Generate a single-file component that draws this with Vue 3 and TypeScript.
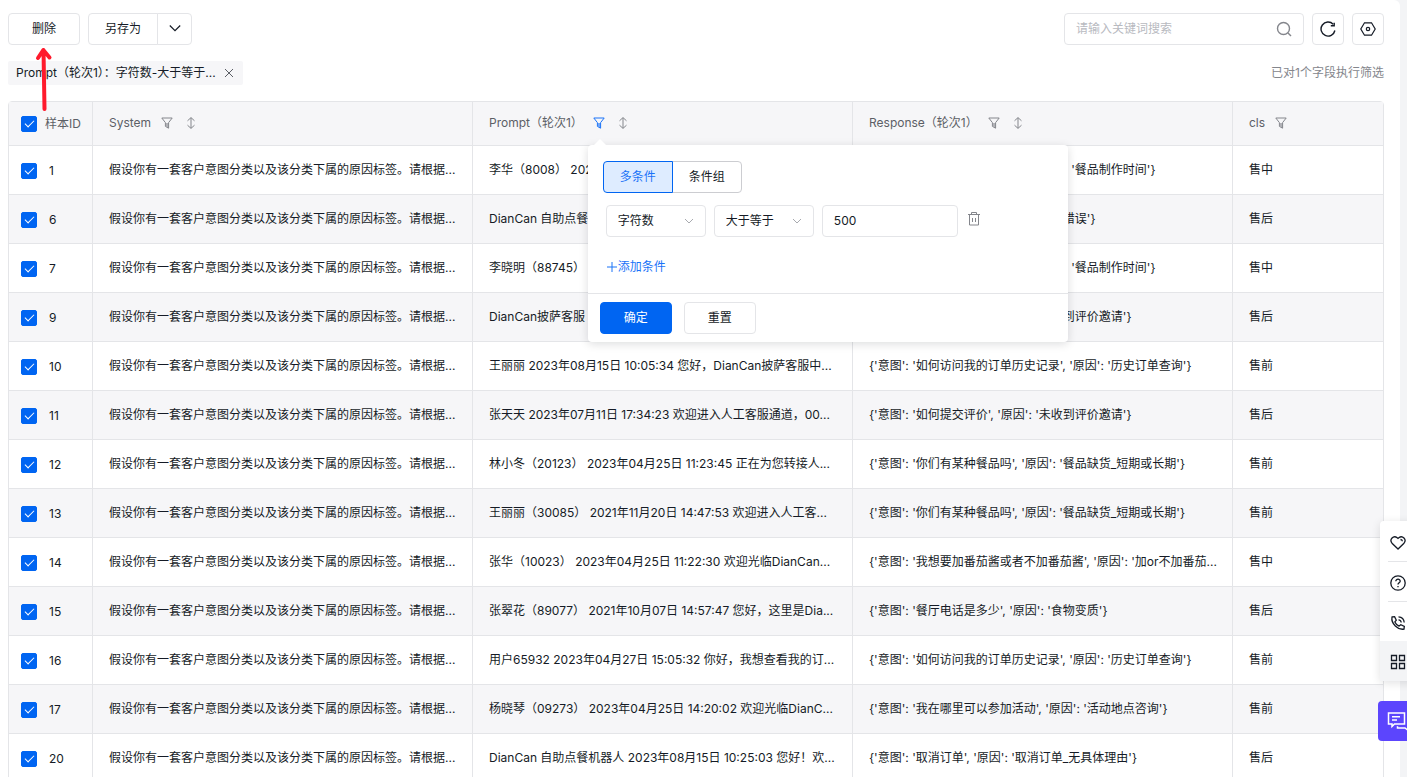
<script setup lang="ts">
import { ref } from 'vue'

interface Row {
  id: number
  system: string
  prompt: string
  response: string
  cls: string
}

interface Column {
  key: 'system' | 'prompt' | 'response' | 'cls'
  title: string
  sortable: boolean
}

const system = '假设你有一套客户意图分类以及该分类下属的原因标签。请根据...'

const answer = (intent: string, reason: string): string => `{'意图': '${intent}', '原因': '${reason}'}`

const makeRow = (id: number, prompt: string, response: string, cls: string): Row => ({
  id,
  system,
  prompt,
  response,
  cls,
})

const columns: Column[] = [
  { key: 'system', title: 'System', sortable: true },
  { key: 'prompt', title: 'Prompt（轮次1）', sortable: true },
  { key: 'response', title: 'Response（轮次1）', sortable: true },
  { key: 'cls', title: 'cls', sortable: false },
]

const rows: Row[] = [
  makeRow(1, '李华（8008） 2023', answer('餐品多久可以做好呢', '餐品制作时间'), '售中'),
  makeRow(6, 'DianCan 自助点餐', answer('如何修改订单', '下单错误'), '售后'),
  makeRow(7, '李晓明（88745）', answer('餐品多久可以做好呢', '餐品制作时间'), '售中'),
  makeRow(9, 'DianCan披萨客服', answer('如何提交评价', '未收到评价邀请'), '售后'),
  makeRow(10, '王丽丽 2023年08月15日 10:05:34 您好，DianCan披萨客服中...', answer('如何访问我的订单历史记录', '历史订单查询'), '售前'),
  makeRow(11, '张天天 2023年07月11日 17:34:23 欢迎进入人工客服通道，00...', answer('如何提交评价', '未收到评价邀请'), '售后'),
  makeRow(12, '林小冬（20123） 2023年04月25日 11:23:45 正在为您转接人...', answer('你们有某种餐品吗', '餐品缺货_短期或长期'), '售前'),
  makeRow(13, '王丽丽（30085） 2021年11月20日 14:47:53 欢迎进入人工客...', answer('你们有某种餐品吗', '餐品缺货_短期或长期'), '售前'),
  makeRow(14, '张华（10023） 2023年04月25日 11:22:30 欢迎光临DianCan...', "{'意图': '我想要加番茄酱或者不加番茄酱', '原因': '加or不加番茄...", '售中'),
  makeRow(15, '张翠花（89077） 2021年10月07日 14:57:47 您好，这里是Dia...', answer('餐厅电话是多少', '食物变质'), '售后'),
  makeRow(16, '用户65932 2023年04月27日 15:05:32 你好，我想查看我的订...', answer('如何访问我的订单历史记录', '历史订单查询'), '售前'),
  makeRow(17, '杨晓琴（09273） 2023年04月25日 14:20:02 欢迎光临DianC...', answer('我在哪里可以参加活动', '活动地点咨询'), '售前'),
  makeRow(20, 'DianCan 自助点餐机器人 2023年08月15日 10:25:03 您好！欢...', answer('取消订单', '取消订单_无具体理由'), '售后'),
]

const selected = ref<number[]>(rows.map((r) => r.id))
const keyword = ref('')
const field = ref('字符数')
const operator = ref('大于等于')
const amount = ref('500')
const mode = ref('多条件')

const toggleAll = (): void => {
  selected.value = selected.value.length === rows.length ? [] : rows.map((r) => r.id)
}
</script>

<template>
  <div class="page">
    <main class="panel">
      <div class="toolbar">
        <button class="btn" type="button">删除</button>
        <div class="split">
          <button class="btn split-main" type="button">另存为</button>
          <button class="btn split-more" type="button" aria-label="更多">
            <svg width="14" height="14" viewBox="0 0 14 14"><path d="M1.800 3.500L7 8.700l5.200-5.200" /></svg>
          </button>
        </div>
        <div class="tools">
          <div class="search">
            <input v-model="keyword" type="text" aria-label="搜索" placeholder="请输入关键词搜索" />
            <svg width="16" height="16" viewBox="0 0 16 16"><circle cx="7.5" cy="7.5" r="6" /><path d="M12 12l3 3" /></svg>
          </div>
          <button class="btn square" type="button" aria-label="刷新">
            <svg width="16" height="16" viewBox="0 0 16 16"><path d="M14.900 9.500A7 7 0 1 1 13.200 3.300" /><path d="M14.200 1.800v2.900h-3.400" /></svg>
          </button>
          <button class="btn square" type="button" aria-label="设置">
            <svg class="fine" width="16" height="16" viewBox="0 0 16 16"><path d="M4.500 1.800h7L15.200 8l-3.700 6.200h-7L.8 8z" /><circle cx="8" cy="8" r="1.700" /></svg>
          </button>
        </div>
      </div>

      <div class="filters">
        <div class="tag">
          <span>Prompt（轮次1）：字符数-大于等于...</span>
          <button class="plain" type="button" aria-label="移除筛选">
            <svg width="10" height="10" viewBox="0 0 10 10"><path d="M1 1l8 8M9 1L1 9" /></svg>
          </button>
        </div>
        <span class="summary">已对1个字段执行筛选</span>
      </div>

      <table class="grid">
        <colgroup>
          <col class="c-id" />
          <col class="c-text" />
          <col class="c-text" />
          <col class="c-text" />
          <col />
        </colgroup>
        <thead>
          <tr>
            <th class="id-cell">
              <label class="pick head-pick">
                <input type="checkbox" :checked="selected.length === rows.length" @change="toggleAll" />
                <span>样本ID</span>
              </label>
            </th>
            <th v-for="col in columns" :key="col.key">
              <div class="head">
                <span>{{ col.title }}</span>
                <div class="anchor">
                  <button class="plain icon" :class="{ active: col.key === 'prompt' }" type="button" aria-label="筛选">
                    <svg width="12" height="12" viewBox="0 0 12 12">
                      <path d="M.8 1h10.400L7.600 5.600v5.600L4.400 9.400V5.600z" />
                      <path class="fill" d="M5 6h2.400v4.800L5 9.200z" />
                    </svg>
                  </button>
                  <section v-if="col.key === 'prompt'" class="popover">
                    <div class="pop-body">
                      <div class="tabs">
                        <button
                          v-for="name in ['多条件', '条件组']"
                          :key="name"
                          class="tab"
                          :class="{ on: mode === name }"
                          type="button"
                          @click="mode = name"
                        >
                          {{ name }}
                        </button>
                      </div>
                      <div class="condition">
                        <div class="select">
                          <select v-model="field" aria-label="字段">
                            <option>字符数</option>
                          </select>
                          <svg width="10" height="10" viewBox="0 0 10 10"><path d="M1 3l4 4 4-4" /></svg>
                        </div>
                        <div class="select">
                          <select v-model="operator" aria-label="运算符">
                            <option>大于等于</option>
                          </select>
                          <svg width="10" height="10" viewBox="0 0 10 10"><path d="M1 3l4 4 4-4" /></svg>
                        </div>
                        <input v-model="amount" class="amount" type="text" aria-label="数值" />
                        <button class="plain trash" type="button" aria-label="删除条件">
                          <svg width="14" height="16" viewBox="0 0 14 16">
                            <path d="M1 3.500h12M4.500 3V1.500h5V3M2.500 4v10h9V4M5.500 7v4M8.500 7v4" />
                          </svg>
                        </button>
                      </div>
                      <button class="plain add" type="button">
                        <svg width="12" height="12" viewBox="0 0 12 12"><path d="M6 1v10M1 6h10" /></svg>
                        <span>添加条件</span>
                      </button>
                    </div>
                    <div class="pop-foot">
                      <button class="btn primary" type="button">确定</button>
                      <button class="btn" type="button">重置</button>
                    </div>
                  </section>
                </div>
                <button v-if="col.sortable" class="plain icon sort" type="button" aria-label="排序">
                  <svg width="12" height="12" viewBox="0 0 12 12"><path d="M6 .8v10.400M2.500 3.800L6 .6l3.500 3.200M2.500 8.200L6 11.400l3.500-3.200" /></svg>
                </button>
              </div>
            </th>
          </tr>
        </thead>
        <tbody>
          <tr v-for="row in rows" :key="row.id">
            <td class="id-cell">
              <label class="pick">
                <input v-model="selected" type="checkbox" :value="row.id" />
                <span>{{ row.id }}</span>
              </label>
            </td>
            <td v-for="col in columns" :key="col.key">{{ row[col.key] }}</td>
          </tr>
        </tbody>
      </table>

      <svg class="pointer" width="20" height="66" viewBox="0 0 20 66">
        <path d="M10.500 63L9.500 4M4 12L9.300 4L15.500 11.500" />
      </svg>
    </main>

    <aside class="dock">
      <div class="dock-list">
        <button class="plain dock-item" type="button" aria-label="收藏">
          <svg width="16" height="16" viewBox="0 0 16 16"><path d="M8 14L2 8.200C-1 4.600 3.400-.2 7.200 2.800L8 3.500l.8-.7C12.600-.2 17 4.600 14 8.200zM10.500 4.500q1.800.2 1.900 1.800" /></svg>
        </button>
        <button class="plain dock-item" type="button" aria-label="帮助">
          <svg width="16" height="16" viewBox="0 0 16 16"><circle cx="8" cy="8" r="7.200" /><path d="M5.800 6.300C5.800 3.300 10.300 3.500 10.200 6.200C10.100 7.800 8 7.800 8 9.500M8 11v1.300" /></svg>
        </button>
        <button class="plain dock-item" type="button" aria-label="电话">
          <svg width="16" height="16" viewBox="0 0 16 16"><path d="M2 2l2.600-.3 1.700 3.500-1.400 1.700c.8 1.900 2.300 3.400 4.200 4.200l1.700-1.400 3.500 1.700-.3 2.700C8 15.300.8 8.500 2 2zM8.500 1.800c3.200.2 5.500 2.500 5.700 5.700M8.500 4.800c1.500.1 2.600 1.200 2.700 2.700" /></svg>
        </button>
        <button class="plain dock-item shaded" type="button" aria-label="应用">
          <svg width="16" height="16" viewBox="0 0 16 16"><path d="M1.500 1.500h5v5h-5zM9.500 1.500h5v5h-5zM1.500 9.500h5v5h-5zM9.500 9.500h5v5h-5z" /></svg>
        </button>
      </div>
      <button class="plain chat" type="button" aria-label="在线咨询">
        <svg width="24" height="20" viewBox="0 0 24 20"><path d="M1.500 2h16v11H7.500L5 15.500V13H1.500zM5 5.800h8M5 9h5M10.500 15.200v1.800h7.500l3 2.300v-2.300h2V9.500h-2.500" /></svg>
      </button>
    </aside>
  </div>
</template>

<style>
body {
  overflow: hidden;
  background: #f3f4f6;
}
</style>

<style scoped>
.page {
  height: 100vh;
  overflow: hidden;
  padding-right: 7px;
  box-sizing: border-box;
  color: #151b26;
  font: 12px/20px Inter, "Noto Sans CJK SC", sans-serif;
}
.page *,
.page *::before {
  box-sizing: border-box;
}
button,
input,
select {
  font: inherit;
  color: inherit;
}
svg {
  display: block;
  flex: none;
  fill: none;
  stroke: currentColor;
}
.panel {
  position: relative;
  min-height: 100%;
  padding: 13px 16px 0 8px;
  background: #fff;
  border-top-right-radius: 6px;
}
.toolbar,
.tools,
.filters,
.tag,
.split,
.head,
.tabs,
.condition,
.pop-foot {
  display: flex;
  align-items: center;
}
.toolbar {
  gap: 8px;
}
.btn {
  display: flex;
  align-items: center;
  justify-content: center;
  height: 32px;
  min-width: 72px;
  padding: 0 16px;
  border: 1px solid #e4e5e8;
  border-radius: 4px;
  background: #fff;
}
.split-main {
  min-width: 70px;
  border-radius: 4px 0 0 4px;
}
.split-more {
  min-width: 35px;
  margin-left: -1px;
  padding: 0;
  border-radius: 0 4px 4px 0;
}
.split-more svg {
  stroke-width: 1.200;
}
.tools {
  gap: 8px;
  margin-left: auto;
}
.square {
  min-width: 32px;
  padding: 0;
}
.square svg {
  stroke-width: 1.400;
}
.square .fine {
  stroke-width: 1.200;
}
.search {
  display: flex;
  align-items: center;
  width: 240px;
  height: 32px;
  padding: 0 11px;
  border: 1px solid #e4e5e8;
  border-radius: 4px;
  color: #84868c;
}
.search input {
  flex: 1;
  min-width: 0;
  padding: 0;
  border: 0;
  outline: 0;
  background: none;
  color: #151b26;
}
.search input::placeholder {
  color: #b8babf;
}
.search svg {
  stroke-width: 1.400;
}
.filters {
  justify-content: space-between;
  margin: 16px 0;
}
.tag {
  gap: 8px;
  height: 24px;
  padding: 0 9px 0 8px;
  background: #f6f6f8;
  border-radius: 2px;
}
.plain {
  display: flex;
  align-items: center;
  padding: 0;
  border: 0;
  background: none;
}
.tag .plain {
  color: #5c5f66;
}
.summary {
  color: #84868c;
}
.grid {
  width: 100%;
  table-layout: fixed;
  border-spacing: 0;
  border: 1px solid #e4e5e8;
  border-radius: 4px 4px 0 0;
}
.c-id {
  width: 84px;
}
.c-text {
  width: 380px;
}
th,
td {
  padding: 0 16px;
  border-bottom: 1px solid #e4e5e8;
  border-right: 1px solid #e4e5e8;
  text-align: left;
  font-weight: 400;
  white-space: nowrap;
}
th:last-child,
td:last-child {
  border-right: 0;
}
th {
  height: 44px;
  padding-bottom: 2px;
  color: #5c5f66;
  background: #f6f6f8;
}
td {
  height: 49px;
}
tbody tr:nth-child(even) td {
  background: #f6f6f8;
}
.id-cell {
  padding-left: 12px;
  padding-right: 0;
}
.pick {
  display: flex;
  align-items: center;
  gap: 12px;
  padding-top: 2px;
}
.head-pick {
  gap: 8px;
}
.pick input {
  appearance: none;
  flex: none;
  display: grid;
  place-items: center;
  width: 16px;
  height: 16px;
  margin: 0;
  border: 1px solid #c4c6ca;
  border-radius: 2px;
}
.pick input:checked {
  border-color: #0065f2;
  background: #0065f2;
}
.pick input:checked::before {
  content: "";
  width: 9px;
  height: 5px;
  margin-bottom: 3px;
  border: solid #fff;
  border-width: 0 0 1px 1px;
  transform: rotate(-45deg);
}
.head {
  gap: 10px;
}
.icon {
  color: #84868c;
}
.icon .fill {
  fill: currentColor;
  stroke: none;
  opacity: 0.600;
}
.icon.active {
  color: #1a73f8;
}
.sort {
  margin-left: 2px;
}
.anchor {
  position: relative;
}
.popover {
  position: absolute;
  z-index: 2;
  top: 28px;
  left: -5px;
  width: 480px;
  background: #fff;
  border-radius: 4px;
  box-shadow: 0 2px 10px rgba(7, 12, 20, 0.140);
  color: #151b26;
}
.popover::before {
  content: "";
  position: absolute;
  top: -6px;
  left: 6px;
  border: 6px solid transparent;
  border-top: 0;
  border-bottom-color: #fff;
}
.pop-body {
  padding: 16px 16px 16px 15px;
  border-bottom: 1px solid #e4e5e8;
}
.tab {
  height: 32px;
  width: 70px;
  padding: 0;
  border: 1px solid #cccdd1;
  border-radius: 0 4px 4px 0;
  background: #fff;
}
.tab + .tab {
  margin-left: -1px;
}
.tab:first-child {
  border-radius: 4px 0 0 4px;
}
.tab.on {
  position: relative;
  border-color: #0065f2;
  background: #deecff;
  color: #1a73f8;
}
.condition {
  gap: 8px;
  margin: 12px 0 20px;
  padding-left: 3px;
}
.select {
  display: grid;
  align-items: center;
  width: 100px;
}
.select > * {
  grid-area: 1 / 1;
}
.select svg {
  justify-self: end;
  margin-right: 12px;
  color: #a8aaaf;
  pointer-events: none;
}
select,
.amount {
  appearance: none;
  width: 100%;
  height: 32px;
  padding: 0 11px;
  border: 1px solid #e4e5e8;
  border-radius: 4px;
  background: #fff;
}
.amount {
  width: 136px;
}
.trash {
  margin-left: 1px;
  padding-bottom: 4px;
  color: #84868c;
}
.add {
  margin-left: 3px;
  color: #1a73f8;
}
.pop-foot {
  gap: 12px;
  padding: 8px 12px;
}
.primary {
  border-color: #0065f2;
  background: #0065f2;
  color: #fff;
}
.pointer {
  position: absolute;
  top: 46px;
  left: 34px;
  z-index: 3;
  stroke: #ff1a2c;
  stroke-width: 4;
  stroke-linecap: round;
  stroke-linejoin: round;
  pointer-events: none;
}
.dock {
  position: fixed;
  right: -11px;
  bottom: 36px;
  z-index: 4;
  display: flex;
  flex-direction: column;
  align-items: flex-end;
  gap: 20px;
}
.dock-list {
  width: 38px;
  border-radius: 4px;
  background: #fff;
  box-shadow: 0 2px 10px rgba(7, 12, 20, 0.120);
}
.dock-item {
  position: relative;
  width: 100%;
  height: 40px;
  padding: 4px 0 0 10px;
}
.dock-item + .dock-item:not(.shaded)::before {
  content: "";
  position: absolute;
  top: 0;
  left: 8px;
  right: 0;
  border-top: 1px solid #e4e5e8;
}
.dock-item svg {
  stroke-width: 1.300;
}
.shaded {
  padding-top: 2px;
  background: #f3f4f6;
}
.chat {
  width: 40px;
  height: 40px;
  padding-left: 9px;
  border-radius: 4px;
  background: #5c45fd;
  color: #fff;
}
.chat svg {
  stroke-width: 1.500;
}
</style>
